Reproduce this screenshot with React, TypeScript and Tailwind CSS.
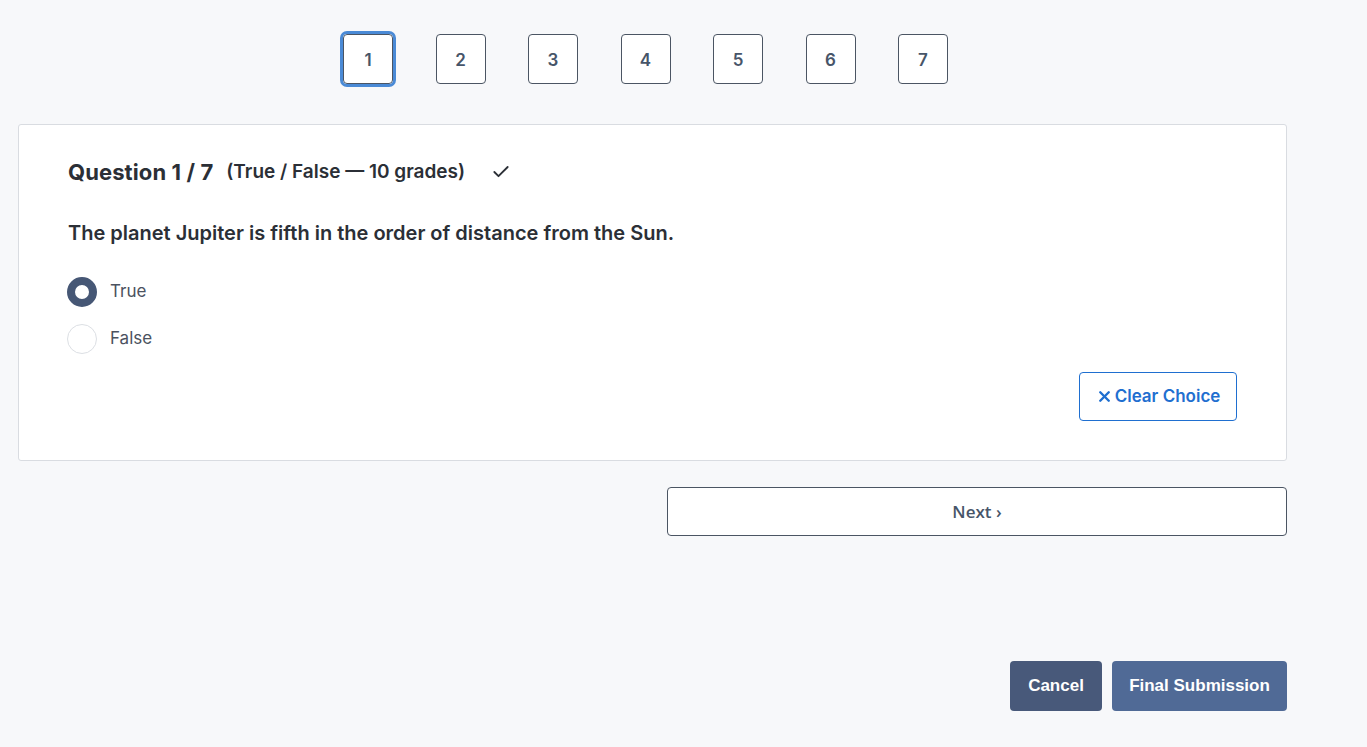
import { Check, X } from "lucide-react";

const pages = [1, 2, 3, 4, 5, 6, 7];

const PageButton = ({ n, active }: { n: number; active?: boolean }) => {
  return (
    <button
      className={
        "w-[50px] h-[50px] rounded-[4px] border border-[#4b5563] bg-white text-[17px] font-semibold text-[#475569] flex items-center justify-center pt-[3px] " +
        (active ? "outline-[3px] outline-solid outline-offset-[0px] outline-[#4a8ad6]" : "")
      }
    >
      {n}
    </button>
  );
};

const Radio = ({ label, checked }: { label: string; checked?: boolean }) => {
  return (
    <label className="flex items-center gap-[13px] h-[30px]">
      <span
        className={
          "w-[30px] h-[30px] rounded-full bg-white " +
          (checked ? "border-[8px] border-[#465775]" : "border border-[#dcdfe4]")
        }
      />
      <span className="text-[17px] text-[#4b5260]">{label}</span>
    </label>
  );
};

export default function App() {
  return (
    <div className="min-h-[747px] bg-[#f7f8fa] font-['Inter',sans-serif] pl-[18px] pr-[80px] pt-[34px]">
      <div className="flex justify-center gap-[42.5px] pr-[14px]">
        {pages.map((p) => (
          <PageButton key={p} n={p} active={p === 1} />
        ))}
      </div>

      <div className="mt-[40px] bg-white border border-[#d9dce1] rounded-[3px] pl-[48px] pr-[49px] pt-[32px] pb-[39px]">
        <div className="flex items-center h-[30px] pl-[1px]">
          <h2 className="text-[22px] font-bold text-[#2b2f36] tracking-[0.1px]">Question 1 / 7</h2>
          <span className="ml-[13px] text-[19px] font-semibold text-[#2b2f36]">(True / False — 10 grades)</span>
          <Check className="ml-[26px] text-[#2b2f36]" size={20} strokeWidth={2.2} />
        </div>

        <p className="mt-[31px] pl-[1px] text-[20px] font-semibold text-[#2b2f36]">
          The planet Jupiter is fifth in the order of distance from the Sun.
        </p>

        <div className="mt-[29px] flex flex-col gap-[17px]">
          <Radio label="True" checked />
          <Radio label="False" />
        </div>

        <div className="flex justify-end mt-[18px]">
          <button className="h-[49px] w-[158px] rounded-[4px] border border-[#1f6fd0] text-[#1f6fd0] text-[17px] font-semibold flex items-center justify-center gap-[2px]">
            <X size={17} strokeWidth={3.4} />
            Clear Choice
          </button>
        </div>
      </div>

      <div className="flex justify-end mt-[26px]">
        <button className="w-[620px] h-[49px] rounded-[4px] border border-[#4b5563] bg-white text-[17px] font-semibold text-[#475569] font-['Open_Sans',sans-serif]">
          Next ›
        </button>
      </div>

      <div className="flex justify-end gap-[10px] mt-[125px]">
        <button className="h-[50px] w-[92px] rounded-[4px] bg-[#48597a] text-white text-[17px] font-bold font-['Liberation_Sans',sans-serif]">
          Cancel
        </button>
        <button className="h-[50px] w-[175px] rounded-[4px] bg-[#506a96] text-white text-[17px] font-bold font-['Liberation_Sans',sans-serif]">
          Final Submission
        </button>
      </div>
    </div>
  );
}
